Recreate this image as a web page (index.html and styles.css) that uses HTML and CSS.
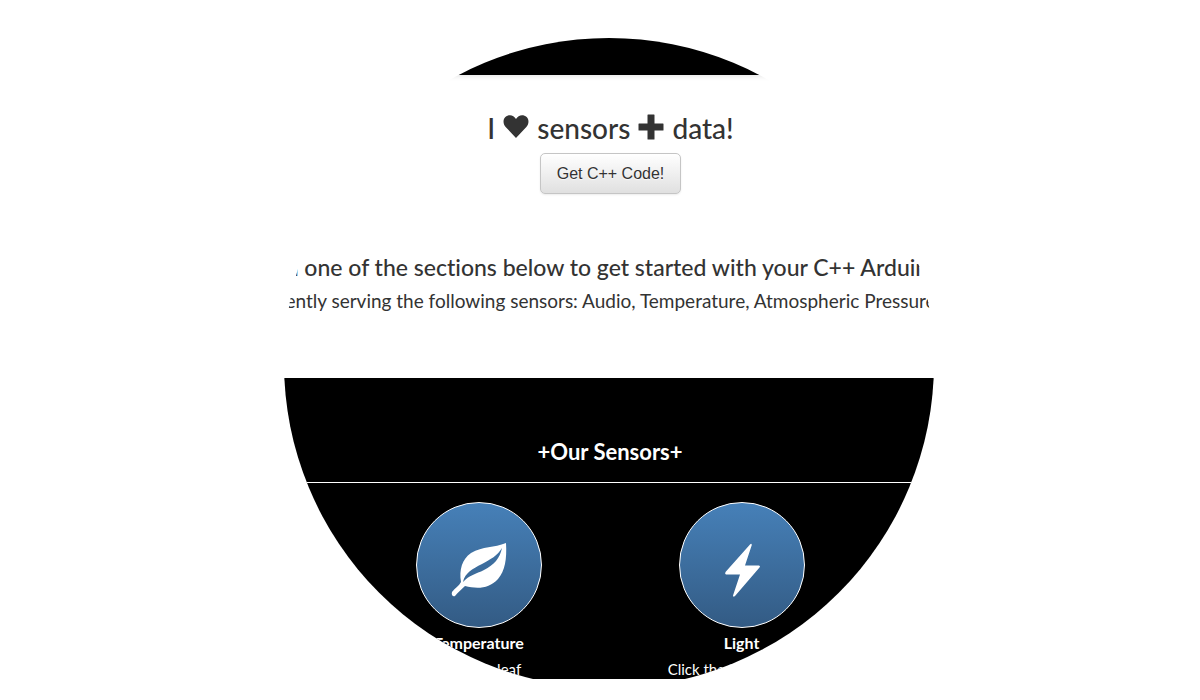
FILE: index.html
```html
<!DOCTYPE html>
<html lang="en">
<head>
<meta charset="utf-8">
<title>Sensors and data</title>
<link rel="stylesheet" href="styles.css">
</head>
<body>
<div class="porthole">
  <header class="navbar"></header>
  <section class="hero">
    <h1 class="title">
      <span>I</span>
      <svg class="heart" viewBox="0 0 26 24" aria-label="love"><path d="M13 24 2.200 12.400C-.7 9.200-.7 4.800 1.900 2.200 5-.9 10.500-.5 13 4.200 15.500-.5 21-.9 24.100 2.200 26.700 4.800 26.700 9.200 23.800 12.400Z"/></svg>
      <span>sensors</span>
      <svg class="plus" viewBox="0 0 26 26" aria-label="plus"><path d="M10 .5h6q.5 0 .5.5v8.500h8.500q.5 0 .5.5v6q0 .5-.5.500h-8.500v8.500q0 .5-.5.500h-6q-.5 0-.5-.5v-8.500H1q-.5 0-.5-.5v-6q0-.5.5-.5h8.500V1q0-.5.5-.5Z"/></svg>
      <span>data!</span>
    </h1>
    <button class="btn" type="button">Get C++ Code!</button>
    <h2 class="lead">n one of the sections below to get started with your C++ Arduino</h2>
    <p class="serving">ently serving the following sensors: Audio, Temperature, Atmospheric Pressure</p>
  </section>
  <section class="sensors">
    <h2 class="sensors-title">+Our Sensors+</h2>
    <div class="sensor-list">
      <article class="sensor">
        <button class="disc" type="button" aria-label="Temperature">
          <svg class="glyph" viewBox="0 0 56 56"><path fill-rule="evenodd" d="M55 1C56 17 54 29 47 37C38 47 26 47 14 44C11 47 7 50 4 54C2 55 0 53 1 50C4 46 8 44 10 40C8 28 11 17 20 11C32 4 43 6 55 1ZM51 6C46 14 40 17 31 22C21 27 14 31 12 40C18 33 25 32 33 28C43 23 49 16 51 6Z"/></svg>
        </button>
        <h3 class="name">Temperature</h3>
        <p class="hint">Click the leaf</p>
      </article>
      <article class="sensor">
        <button class="disc" type="button" aria-label="Light">
          <svg class="glyph" viewBox="0 0 56 56"><path d="M36 2.500Q37.500 1 37.800 3L31 23.500H45Q46.800 24 45.500 25.500L21 54Q19 55.500 19 53.500L26 32.500H12Q10.500 32 11.500 30Z"/></svg>
        </button>
        <h3 class="name">Light</h3>
        <p class="hint">Click the lightning bolt</p>
      </article>
    </div>
  </section>
</div>
</body>
</html>
```
FILE: styles.css
```css
body {
  margin: 0;
  background: #fff;
  color: #333;
  font-family: Lato, "Open Sans", sans-serif;
  font-variant-ligatures: none;
  overflow: hidden;
}
h1, h2, h3, p { margin: 0; }
.porthole {
  margin-top: 38px;
  clip-path: circle(325px at calc(50% + 9px) 325px);
}
.navbar {
  position: relative;
  height: 37px;
  background: #000;
  box-shadow: 0 1px 5px rgba(0, 0, 0, .12);
}
.hero {
  display: flex;
  flex-direction: column;
  align-items: center;
  padding: 33px 0 61px 21px;
  text-align: center;
  white-space: nowrap;
}
.title {
  display: flex;
  align-items: center;
  gap: 8px;
  font-size: 28px;
  line-height: 40px;
  font-weight: 500;
}
.heart, .plus { width: 26px; fill: #333; }
.heart { height: 23px; margin-bottom: 4px; }
.plus { height: 26px; margin-bottom: 2px; }
.btn {
  margin-top: 5px;
  padding: 9px 16px;
  border: 1px solid #c5c5c5;
  border-radius: 5px;
  background: linear-gradient(#fff, #e0e0e0);
  box-shadow: 0 1px 2px rgba(0, 0, 0, .08);
  color: #333;
  font: 16px/21px "Liberation Sans", Arial, sans-serif;
  text-shadow: 0 1px 1px rgba(255, 255, 255, .75);
}
.lead {
  margin-top: 56px;
  padding-left: 6px;
  font-size: 23px;
  line-height: 34px;
  font-weight: 500;
}
.serving {
  font-size: 19px;
  line-height: 33px;
}
.sensors {
  height: 301px;
  overflow: hidden;
  padding-left: 20px;
  background: #000;
  color: #fff;
  text-align: center;
}
.sensors-title {
  margin-left: -20px;
  padding: 58px 0 14px 20px;
  border-bottom: 1px solid #fff;
  font-size: 22px;
  line-height: 32px;
  font-weight: 700;
}
.sensor-list {
  display: grid;
  grid-template-columns: repeat(2, 263px);
  justify-content: center;
  padding-top: 19px;
}
.disc {
  display: grid;
  place-items: center;
  width: 126px;
  height: 126px;
  margin: 0 auto;
  padding: 10px 0 0;
  border: 1px solid #fff;
  border-radius: 50%;
  background: linear-gradient(#4680b8, #335b84);
}
.glyph { width: 56px; height: 56px; fill: #fff; }
.name {
  margin-top: 2px;
  font-size: 16px;
  line-height: 26px;
  font-weight: 700;
}
.hint {
  font-size: 15px;
  line-height: 26px;
}
```
